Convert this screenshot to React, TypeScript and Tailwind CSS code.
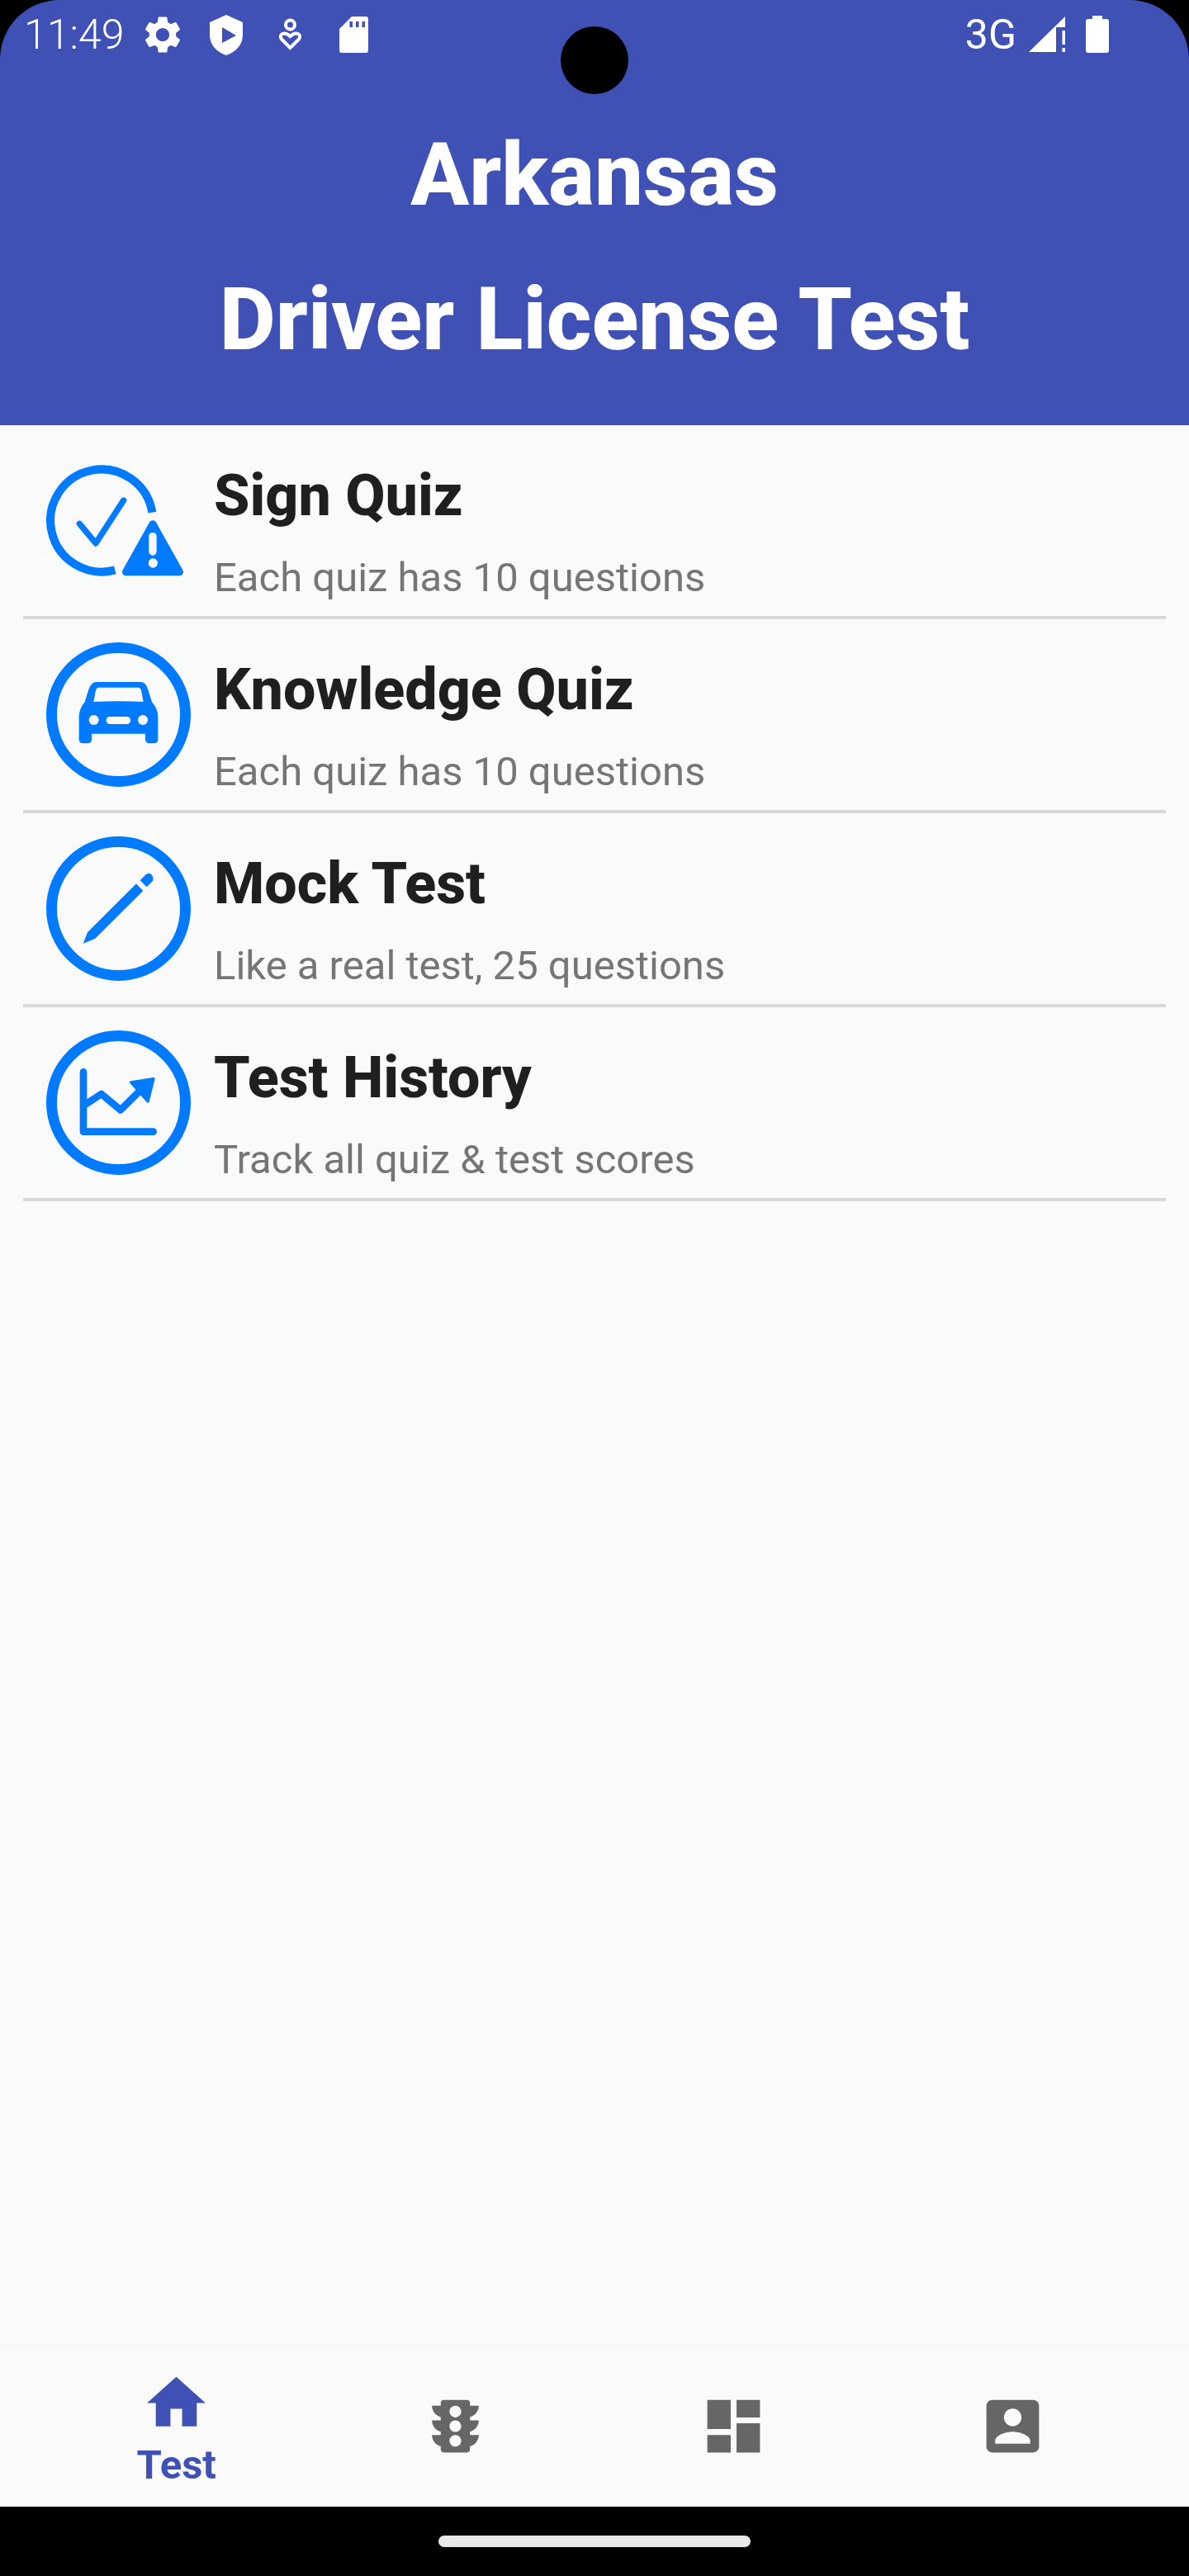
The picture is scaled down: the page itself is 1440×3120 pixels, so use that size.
import { ReactNode } from "react";

const BLUE = "#007AFF";

function StatusIcons() {
  return (
    <div className="flex items-center">
      {/* settings */}
      <svg width="54" height="54" viewBox="0 0 24 24" fill="white" className="ml-[20px]">
        <path d="M19.14 12.94c.04-.3.06-.61.06-.94 0-.32-.02-.64-.07-.94l2.03-1.58c.18-.14.23-.41.12-.61l-1.92-3.32c-.12-.22-.37-.29-.59-.22l-2.39.96c-.5-.38-1.03-.7-1.62-.94l-.36-2.54c-.04-.24-.24-.41-.48-.41h-3.84c-.24 0-.43.17-.47.41l-.36 2.54c-.59.24-1.13.57-1.62.94l-2.39-.96c-.22-.08-.47 0-.59.22L2.74 8.87c-.12.21-.08.47.12.61l2.03 1.58c-.05.3-.09.63-.09.94s.02.64.07.94l-2.03 1.58c-.18.14-.23.41-.12.61l1.92 3.32c.12.22.37.29.59.22l2.39-.96c.5.38 1.03.7 1.62.94l.36 2.54c.05.24.24.41.48.41h3.84c.24 0 .44-.17.47-.41l.36-2.54c.59-.24 1.13-.56 1.62-.94l2.39.96c.22.08.47 0 .59-.22l1.92-3.32c.12-.22.07-.47-.12-.61l-2.01-1.58zM12 15.6c-1.98 0-3.6-1.62-3.6-3.6s1.62-3.6 3.6-3.6 3.6 1.62 3.6 3.6-1.62 3.6-3.6 3.6z" />
      </svg>
      {/* shield with play */}
      <svg width="40" height="49" viewBox="254 18 40 49" className="ml-[30px]">
        <path
          fillRule="evenodd"
          fill="white"
          d="M274 18 L294 27 V42 C294 54 286 63 274 67 C262 63 254 54 254 42 V27 Z M269 33 V52 L286 43 Z"
        />
      </svg>
      {/* person heart */}
      <svg width="30" height="40" viewBox="337 22 30 40" fill="none" stroke="white" strokeWidth="4" className="ml-[43px]">
        <circle cx="351.5" cy="30" r="5.5" />
        <path d="M351.5 58 L341 47.5 C337 42 344 37 351.5 44 C359 37 366 42 362 47.5 Z" />
      </svg>
      {/* sd card */}
      <svg width="35" height="44" viewBox="411 20 35 44" className="ml-[44px]">
        <path
          fillRule="evenodd"
          fill="white"
          d="M426 20 H443 Q446 20 446 23 V61 Q446 64 443 64 H414 Q411 64 411 61 V35 Z M423.5 26 V33 H427 V26 Z M431 26 V33 H434.5 V26 Z M438.5 26 V33 H442 V26 Z"
        />
      </svg>
    </div>
  );
}

function SignQuizIcon() {
  return (
    <svg width="175" height="175" viewBox="168 129 525 525" fill="none">
      <path d="M553 362 A186 186 0 1 0 418 571" stroke={BLUE} strokeWidth="30" />
      <path d="M289 403 L348 474 L449 318" stroke={BLUE} strokeWidth="22" strokeLinecap="round" strokeLinejoin="round" />
      <path d="M555 405 L458 578 H652 Z" fill={BLUE} stroke={BLUE} strokeWidth="28" strokeLinejoin="round" />
      <rect x="541" y="435" width="28" height="83" rx="14" fill="#fafafa" />
      <circle cx="556" cy="546" r="17" fill="#fafafa" />
    </svg>
  );
}

function CircleIcon({ viewBox, children }: { viewBox: string; children: ReactNode }) {
  return (
    <svg width="175" height="175" viewBox={viewBox} fill="none">
      {children}
    </svg>
  );
}

function CarIcon() {
  return (
    <CircleIcon viewBox="168 113 525 525">
      <circle cx="430.5" cy="375.5" r="243" stroke={BLUE} strokeWidth="39" />
      <path
        fillRule="evenodd"
        fill={BLUE}
        d="M350 257 H510 Q530 257 538 285 L552 330 Q574 355 574 385 V465 Q574 480 560 480 H542 Q528 480 528 465 V445 H333 V465 Q333 480 318 480 H300 Q287 480 287 465 V385 Q287 355 308 330 L322 285 Q332 257 350 257 Z M358 277 H503 Q510 277 513 288 L521 329 Q430 325 340 329 L348 288 Q351 277 358 277 Z"
      />
      <circle cx="341" cy="395" r="18" fill="#fafafa" />
      <circle cx="519" cy="395" r="18" fill="#fafafa" />
      <rect x="386" y="383" width="88" height="27" rx="13" fill="#fafafa" />
    </CircleIcon>
  );
}

function PencilIcon() {
  return (
    <CircleIcon viewBox="168 98 525 525">
      <circle cx="430.5" cy="360.5" r="243" stroke={BLUE} strokeWidth="39" />
      <path fill={BLUE} d="M302 487 L318 447 L495 270 L520 296 L345 470 Z" />
      <path
        fill={BLUE}
        d="M509 258 L530 237 Q540 228 550 237 Q562 250 553 262 L533 282 Z"
      />
    </CircleIcon>
  );
}

function ChartIcon() {
  return (
    <CircleIcon viewBox="168 84 525 525">
      <circle cx="430.5" cy="346.5" r="243" stroke={BLUE} strokeWidth="39" />
      <path d="M303 235 V452 H557" stroke={BLUE} strokeWidth="26" strokeLinecap="round" strokeLinejoin="round" />
      <path d="M303 358 L368 315 L438 373 L510 302" stroke={BLUE} strokeWidth="26" strokeLinejoin="round" />
      <path d="M476 273 L558 260 L537 342 Z" fill={BLUE} stroke={BLUE} strokeWidth="10" strokeLinejoin="round" />
    </CircleIcon>
  );
}

const rows = [
  { title: "Sign Quiz", sub: "Each quiz has 10 questions", icon: <SignQuizIcon /> },
  { title: "Knowledge Quiz", sub: "Each quiz has 10 questions", icon: <CarIcon /> },
  { title: "Mock Test", sub: "Like a real test, 25 questions", icon: <PencilIcon /> },
  { title: "Test History", sub: "Track all quiz & test scores", icon: <ChartIcon /> },
];

export default function App() {
  return (
    <div className="flex h-[3120px] w-[1440px] flex-col bg-black [font-family:Roboto,sans-serif]">
      {/* Header with status bar */}
      <header className="relative h-[515px] rounded-t-[72px] bg-[#3F51B5] text-white">
        <div className="flex h-[84px] items-center justify-between pl-[29px] pr-[97px]">
          <div className="flex items-center">
            <span className="text-[50px] font-light leading-[84px]">11:49</span>
            <StatusIcons />
          </div>
          <div className="flex items-center">
            <span className="text-[50px] leading-[84px]">3G</span>
            {/* signal */}
            <svg width="45" height="44" viewBox="1246 20 45 44" fill="white" className="ml-[15px]">
              <path d="M1246 63 L1290 20 V33 H1279 V63 Z" />
              <rect x="1286.5" y="37" width="3.5" height="17" />
              <rect x="1286.5" y="58" width="3.5" height="5" />
            </svg>
            {/* battery */}
            <svg width="28" height="46" viewBox="1315 19 28 46" fill="white" className="ml-[24px]">
              <path d="M1323 19 H1335 V23 H1340 Q1343 23 1343 26 V61 Q1343 64 1340 64 H1318 Q1315 64 1315 61 V26 Q1315 23 1318 23 H1323 Z" />
            </svg>
          </div>
        </div>
        {/* Camera cutout */}
        <div className="absolute left-[679px] top-[32px] h-[82px] w-[82px] rounded-full bg-black" />
        <h1 className="text-center text-[105px] font-extrabold leading-[175px]">
          <div className="mt-[41px]">Arkansas</div>
          <div>Driver License Test</div>
        </h1>
      </header>

      {/* Menu list */}
      <main className="flex-1 bg-[#fafafa]">
        {rows.map((r) => (
          <div key={r.title} className="mx-[28px] flex h-[235px] border-b-4 border-[#d9d9d9]">
            <div className="ml-[28px] mt-[28px] h-[175px] w-[175px]">{r.icon}</div>
            <div className="ml-[28px] flex flex-col">
              <div className="mt-[43px] text-[70px] font-extrabold leading-[84px] text-[#1f1f1f]">{r.title}</div>
              <div className="mt-[16px] text-[49px] leading-[84px] text-[#757575]">{r.sub}</div>
            </div>
          </div>
        ))}
      </main>

      {/* Bottom nav */}
      <nav className="grid h-[196px] grid-cols-4 border-t border-[#f2f2f2] bg-[#fafafa] px-[45px]">
        <div className="flex flex-col items-center justify-center pt-[4px] text-[#3F51B5]">
          <svg width="85" height="85" viewBox="0 0 24 24" fill="currentColor">
            <path d="M10 20v-6h4v6h5v-8h3L12 3 2 12h3v8z" />
          </svg>
          <span className="mt-[4px] text-[49px] font-bold leading-[57px]">Test</span>
        </div>
        <div className="flex items-center justify-center text-[#666666]">
          <svg width="85" height="85" viewBox="0 0 24 24" fill="currentColor">
            <path d="M20 10h-3V8.86c1.72-.45 3-2 3-3.86h-3V4c0-.55-.45-1-1-1H8c-.55 0-1 .45-1 1v1H4c0 1.86 1.28 3.41 3 3.86V10H4c0 1.86 1.28 3.41 3 3.86V15H4c0 1.86 1.28 3.41 3 3.86V20c0 .55.45 1 1 1h8c.55 0 1-.45 1-1v-1.14c1.72-.45 3-2 3-3.86h-3v-1.14c1.72-.45 3-2 3-3.86zm-8 9c-1.11 0-2-.9-2-2s.89-2 2-2c1.1 0 2 .9 2 2s-.89 2-2 2zm0-5c-1.11 0-2-.9-2-2s.89-2 2-2c1.1 0 2 .9 2 2s-.89 2-2 2zm0-5c-1.11 0-2-.9-2-2 0-1.11.89-2 2-2 1.1 0 2 .89 2 2 0 1.1-.89 2-2 2z" />
          </svg>
        </div>
        <div className="flex items-center justify-center text-[#666666]">
          <svg width="85" height="85" viewBox="0 0 24 24" fill="currentColor">
            <path d="M3 13h8V3H3v10zm0 8h8v-6H3v6zm10 0h8V11h-8v10zm0-18v6h8V3h-8z" />
          </svg>
        </div>
        <div className="flex items-center justify-center text-[#666666]">
          <svg width="85" height="85" viewBox="0 0 24 24" fill="currentColor">
            <path d="M3 5v14c0 1.1.89 2 2 2h14c1.1 0 2-.9 2-2V5c0-1.1-.9-2-2-2H5c-1.11 0-2 .9-2 2zm12 4c0 1.66-1.34 3-3 3s-3-1.34-3-3 1.34-3 3-3 3 1.34 3 3zm-9 8c0-2 4-3.1 6-3.1s6 1.1 6 3.1v1H6v-1z" />
          </svg>
        </div>
      </nav>

      {/* Gesture bar */}
      <div className="flex h-[84px] items-center justify-center">
        <div className="h-[14px] w-[378px] rounded-full bg-[#e8e8e8]" />
      </div>
    </div>
  );
}
